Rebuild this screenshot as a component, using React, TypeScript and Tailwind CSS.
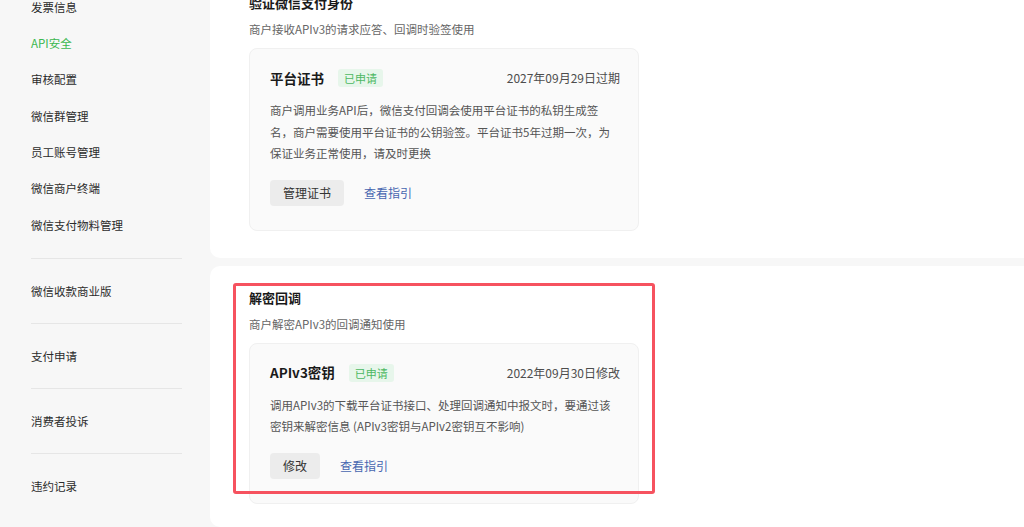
const font = { fontFamily: '"Noto Sans CJK SC", "Noto Sans", sans-serif' }

const menuTop = ['发票信息', 'API安全', '审核配置', '微信群管理', '员工账号管理', '微信商户终端', '微信支付物料管理']
const menuGroups = ['微信收款商业版', '支付申请', '消费者投诉', '违约记录']

function KeyCard({ title, date, lines, button }: { title: string; date: string; lines: string; button: string }) {
  return (
    <div className="w-[390px] rounded-[8px] border border-[#f0f0f0] bg-[#fafafa] pl-5 pr-[18px] pt-[20px] pb-[24px]">
      <div className="flex items-center h-[18px]">
        <span className="text-[13.5px] font-bold text-[#1a1a1a]">{title}</span>
        <span className="ml-[14px] h-[18px] px-[6px] rounded-[3px] bg-[#e7f6eb] text-[11px] leading-[18px] text-[#4cb862]">已申请</span>
        <span className="ml-auto text-[12px] text-[#4d4d4d]">{date}</span>
      </div>
      <p className="mt-[13px] w-[350px] text-[11.5px] leading-[21.5px] text-[#555]">{lines}</p>
      <div className="mt-[15px] flex items-center gap-5">
        <button className="h-[26px] px-[13px] rounded-[4px] bg-[#ececec] text-[12px] text-[#333]">{button}</button>
        <a href="#" className="text-[12px] text-[#4766b0]">查看指引</a>
      </div>
    </div>
  )
}

export default function App() {
  return (
    <div style={font} className="flex h-[527px] w-[1024px] overflow-hidden bg-[#f7f7f7]">
      <aside className="w-[210px] shrink-0 pl-[31px]">
        <div className="-mt-[11px] flex flex-col">
          {menuTop.map((m) => (
            <div key={m} className={`h-[36.33px] flex items-center text-[11.5px] ${m === 'API安全' ? 'text-[#3cb850]' : 'text-[#2b2b2b]'}`}>
              {m}
            </div>
          ))}
        </div>
        <div className="mt-[15px] w-[151px]">
          {menuGroups.map((m) => (
            <div key={m}>
              <div className="h-px bg-[#e6e6e6]" />
              <div className="h-[64px] flex items-center text-[11.5px] text-[#2b2b2b]">{m}</div>
            </div>
          ))}
        </div>
      </aside>
      <main className="flex-1 flex flex-col gap-[8px]">
        <section className="-mt-[29px] rounded-l-[10px] bg-white pl-[39px] pt-[22px] pb-[27px]">
          <h2 className="text-[13px] leading-[20px] font-bold text-[#1a1a1a]">验证微信支付身份</h2>
          <p className="mt-[6px] text-[11.5px] leading-[20px] text-[#666]">商户接收APIv3的请求应答、回调时验签使用</p>
          <div className="mt-[9px]">
            <KeyCard
              title="平台证书"
              date="2027年09月29日过期"
              lines="商户调用业务API后，微信支付回调会使用平台证书的私钥生成签名，商户需要使用平台证书的公钥验签。平台证书5年过期一次，为保证业务正常使用，请及时更换"
              button="管理证书"
            />
          </div>
        </section>
        <section className="relative flex-1 rounded-l-[10px] bg-white pl-[39px] pt-[22px]">
          <h2 className="text-[13px] leading-[20px] font-bold text-[#1a1a1a]">解密回调</h2>
          <p className="mt-[6px] text-[11.5px] leading-[20px] text-[#666]">商户解密APIv3的回调通知使用</p>
          <div className="mt-[9px]">
            <KeyCard
              title="APIv3密钥"
              date="2022年09月30日修改"
              lines="调用APIv3的下载平台证书接口、处理回调通知中报文时，要通过该密钥来解密信息 (APIv3密钥与APIv2密钥互不影响)"
              button="修改"
            />
          </div>
          <div className="absolute left-[23px] top-[17px] w-[422px] h-[211px] rounded-[3px] border-[3px] border-[#f6525f]" />
        </section>
      </main>
    </div>
  )
}
